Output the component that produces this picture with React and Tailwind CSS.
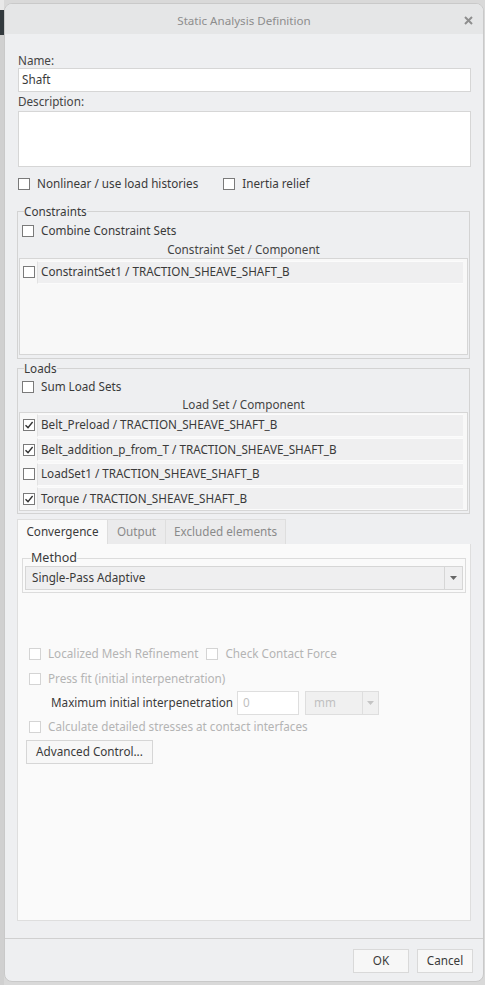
import React from "react";

const font = { fontFamily: '"Noto Sans", "Open Sans", sans-serif' };

function Box({ checked, disabled }) {
  return (
    <span
      className={
        "inline-flex items-center justify-center w-[12px] h-[12px] shrink-0 border bg-white " +
        (disabled ? "border-[#d4d4d4]" : "border-[#7a7a7a]")
      }
    >
      {checked && (
        <svg width="10" height="10" viewBox="0 0 10 10">
          <path d="M1.5 5.2 L4 7.6 L8.6 2" fill="none" stroke="#333" strokeWidth="1.4" />
        </svg>
      )}
    </span>
  );
}

function Check({ label, checked, disabled, className = "" }) {
  return (
    <div className={"flex items-center gap-[7px] " + className}>
      <Box checked={checked} disabled={disabled} />
      <span className={disabled ? "text-[#b4b4b4]" : "text-[#3a3a3a]"}>{label}</span>
    </div>
  );
}

function Row({ checked, label }) {
  return (
    <div className="flex items-center h-[24.5px]">
      <div className="w-[17px] flex justify-center items-center h-full">
        <Box checked={checked} />
      </div>
      <div className="flex-1 mr-[4px] h-[23px] flex items-center bg-[#efeff0] border-y border-[#fbfbfb] border-l border-l-[#e2e2e2] pl-[3px] text-[#3a3a3a]">
        {label}
      </div>
    </div>
  );
}

export default function App() {
  return (
    <div className="w-[485px] h-[985px] bg-[#d9d9d9] flex overflow-hidden text-[11.7px]" style={font}>
      <div className="w-[4px] flex flex-col shrink-0">
        <div className="h-[10px] bg-[#e8e8e8]" />
        <div className="h-[25px] bg-[#333a3e]" />
        <div className="flex-1 bg-[#d0d0d0]" />
      </div>
      <div className="mt-[3px] w-[480px] h-[979px] rounded-[8px] bg-[#eeeff1] border border-[#c9c9c9] flex flex-col overflow-hidden shrink-0">
        {/* Title */}
        <div className="h-[30px] pt-[3px] bg-[#e5e6e7] flex items-center justify-center relative shrink-0">
          <span className="text-[11.6px] text-[#8d8d8d]">Static Analysis Definition</span>
          <svg className="absolute right-[10px] top-[12px]" width="9" height="9" viewBox="0 0 9 9">
            <path d="M1 1 L8 8 M8 1 L1 8" stroke="#8e8e8e" strokeWidth="2" />
          </svg>
        </div>

        {/* Body */}
        <div className="flex-1 flex flex-col px-[12px] pt-[19px]">
          <div className="h-[15px] leading-[15px] text-[#444] ml-[1px]">Name:</div>
          <div className="h-[24px] ml-[1px] bg-white border border-[#d6d6d6] flex items-center pl-[3px] text-[#3a3a3a]">
            Shaft
          </div>
          <div className="h-[19px] leading-[19px] text-[#444] ml-[1px]">Description:</div>
          <div className="h-[56px] ml-[1px] bg-white border border-[#d6d6d6]" />

          <div className="flex items-center h-[34px] ml-[1px]">
            <Check label="Nonlinear / use load histories" />
            <Check label="Inertia relief" className="ml-[25px]" />
          </div>

          {/* Constraints */}
          <fieldset className="mt-[2px] mr-[1px] border border-[#d3d3d3] px-[1px] pb-[3px]">
            <legend className="ml-[5px] px-0 h-[16px] leading-[16px] text-[#3a3a3a]">Constraints</legend>
            <Check label="Combine Constraint Sets" className="ml-[3px] mt-[2px] h-[19px]" />
            <div className="text-center h-[18px] leading-[18px] text-[#444]">Constraint Set / Component</div>
            <div className="h-[97px] border border-[#d6d6d6] bg-[#f8f8f8] pt-[1px]">
              <Row label="ConstraintSet1 / TRACTION_SHEAVE_SHAFT_B" />
            </div>
          </fieldset>

          {/* Loads */}
          <fieldset className="mt-[1px] mr-[1px] border border-[#d3d3d3] px-[1px] pb-[2px]">
            <legend className="ml-[5px] px-0 h-[16px] leading-[16px] text-[#3a3a3a]">Loads</legend>
            <Check label="Sum Load Sets" className="ml-[3px] mt-[1px] h-[19px]" />
            <div className="text-center h-[16px] leading-[16px] text-[#444]">Load Set / Component</div>
            <div className="h-[99px] border border-[#d6d6d6] bg-[#f8f8f8]">
              <Row checked label="Belt_Preload / TRACTION_SHEAVE_SHAFT_B" />
              <Row checked label="Belt_addition_p_from_T / TRACTION_SHEAVE_SHAFT_B" />
              <Row label="LoadSet1 / TRACTION_SHEAVE_SHAFT_B" />
              <Row checked label="Torque / TRACTION_SHEAVE_SHAFT_B" />
            </div>
          </fieldset>

          {/* Tabs */}
          <div className="flex mt-[5px] h-[25px]">
            <div className="w-[90px] bg-[#fafafa] border-t border-l border-[#dedede] flex items-center justify-center text-[#3a3a3a]">
              Convergence
            </div>
            <div className="w-[58px] bg-[#ebebec] border-t border-l border-[#dedede] flex items-center justify-center text-[#8a8a8a]">
              Output
            </div>
            <div className="w-[121px] bg-[#ebebec] border-t border-x border-[#dedede] flex items-center justify-center text-[#8a8a8a]">
              Excluded elements
            </div>
          </div>
          <div className="h-[377px] bg-[#fafafa] border border-[#dedede] border-t-0 flex flex-col px-[4px]">
            <fieldset className="mt-[6px] border border-[#dcdcdc] px-[2px] pb-[2px]">
              <legend className="ml-[6px] px-0 h-[16px] leading-[16px] text-[#3a3a3a] text-[12.5px]">Method</legend>
              <div className="h-[24px] bg-[#efeff0] border border-[#d6d6d6] flex items-center">
                <span className="flex-1 pl-[6px] text-[#3a3a3a]">Single-Pass Adaptive</span>
                <div className="w-[18px] h-full border-l border-[#d6d6d6] flex items-center justify-center">
                  <svg width="7" height="4" viewBox="0 0 7 4">
                    <path d="M0 0 L7 0 L3.5 4 Z" fill="#666" />
                  </svg>
                </div>
              </div>
            </fieldset>

            <div className="mt-[52px] flex items-center h-[18px] ml-[7px]">
              <Check disabled label="Localized Mesh Refinement" />
              <Check disabled label="Check Contact Force" className="ml-[8px]" />
            </div>
            <Check disabled label="Press fit (initial interpenetration)" className="ml-[7px] mt-[7px] h-[18px]" />
            <div className="flex items-center mt-[3px] h-[24px] ml-[29px]">
              <span className="text-[#3a3a3a]">Maximum initial interpenetration</span>
              <div className="ml-[4px] w-[62px] h-[24px] bg-white border border-[#dedede] flex items-center pl-[5px] text-[#c0c0c0]">
                0
              </div>
              <div className="ml-[6px] w-[74px] h-[24px] bg-[#f0f0f0] border border-[#dedede] flex items-center">
                <span className="flex-1 pl-[8px] text-[#c0c0c0]">mm</span>
                <div className="w-[16px] h-full border-l border-[#dedede] flex items-center justify-center">
                  <svg width="7" height="4" viewBox="0 0 7 4">
                    <path d="M0 0 L7 0 L3.5 4 Z" fill="#c4c4c4" />
                  </svg>
                </div>
              </div>
            </div>
            <Check disabled label="Calculate detailed stresses at contact interfaces" className="ml-[7px] mt-[3px] h-[18px]" />
            <div className="mt-[4px] ml-[4px] w-[127px] h-[24px] bg-[#f7f7f7] border border-[#d6d6d6] flex items-center justify-center text-[#3a3a3a]">
              Advanced Control...
            </div>
          </div>
        </div>

        {/* Footer */}
        <div className="h-[45px] border-t border-[#d0d0d0] flex items-start justify-end gap-[8px] pr-[10px] pt-[10px] shrink-0 mt-[17px]">
          <div className="w-[56px] h-[24px] bg-[#f7f7f7] border border-[#d9d9d9] flex items-center justify-center text-[#3a3a3a]">OK</div>
          <div className="w-[56px] h-[24px] bg-[#f7f7f7] border border-[#d9d9d9] flex items-center justify-center text-[#3a3a3a]">Cancel</div>
        </div>
      </div>
    </div>
  );
}
